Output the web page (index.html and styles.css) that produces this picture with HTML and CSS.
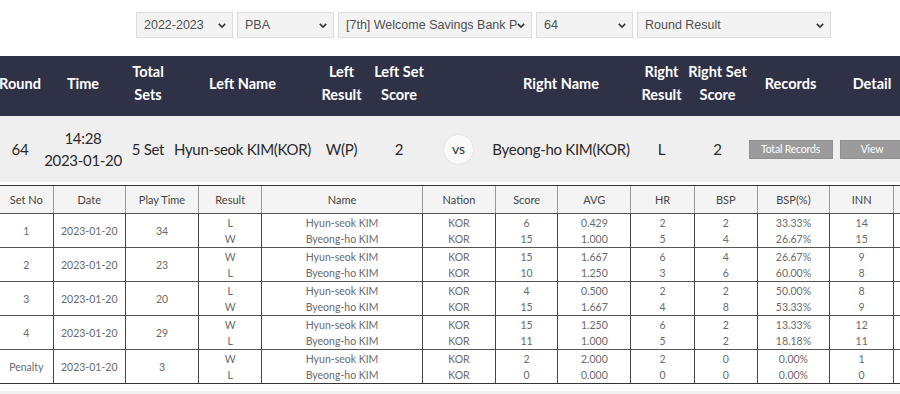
FILE: index.html
```html
<!DOCTYPE html>
<html lang="en">
<head>
<meta charset="utf-8">
<title>Round Result</title>
<link rel="stylesheet" href="styles.css">
</head>
<body>
<div class="page">
  <div class="filters">
    <label class="sel w-s"><select><option>2022-2023</option></select><svg class="chev" viewBox="0 0 10 6"><path d="M1 1l4 4 4-4"/></svg></label>
    <label class="sel w-s"><select><option>PBA</option></select><svg class="chev" viewBox="0 0 10 6"><path d="M1 1l4 4 4-4"/></svg></label>
    <label class="sel w-l"><select class="tight"><option>[7th] Welcome Savings Bank PBA Championship</option></select><svg class="chev" viewBox="0 0 10 6"><path d="M1 1l4 4 4-4"/></svg></label>
    <label class="sel w-s"><select><option>64</option></select><svg class="chev" viewBox="0 0 10 6"><path d="M1 1l4 4 4-4"/></svg></label>
    <label class="sel w-l"><select><option>Round Result</option></select><svg class="chev" viewBox="0 0 10 6"><path d="M1 1l4 4 4-4"/></svg></label>
  </div>

  <div class="match">
    <div class="mgrid mhead">
      <div>Round</div>
      <div>Time</div>
      <div>Total<br>Sets</div>
      <div>Left Name</div>
      <div>Left<br>Result</div>
      <div>Left Set<br>Score</div>
      <div></div>
      <div>Right Name</div>
      <div>Right<br>Result</div>
      <div>Right Set<br>Score</div>
      <div>Records</div>
      <div>Detail</div>
    </div>
    <div class="mgrid mrow">
      <div>64</div>
      <div class="time">14:28<br>2023-01-20</div>
      <div>5 Set</div>
      <div>Hyun-seok KIM(KOR)</div>
      <div>W(P)</div>
      <div>2</div>
      <div><span class="vs">vs</span></div>
      <div>Byeong-ho KIM(KOR)</div>
      <div>L</div>
      <div>2</div>
      <div><button class="btn btn-rec">Total Records</button></div>
      <div><button class="btn btn-view">View</button></div>
    </div>
  </div>

  <table class="sets">
    <colgroup>
      <col class="c53"><col class="c72"><col class="c73"><col class="c63"><col class="c160"><col class="c73"><col class="c62"><col class="c73"><col class="c63"><col class="c63"><col class="c72"><col class="c64"><col class="c40">
    </colgroup>
    <thead>
      <tr><th>Set No</th><th>Date</th><th>Play Time</th><th>Result</th><th>Name</th><th>Nation</th><th>Score</th><th>AVG</th><th>HR</th><th>BSP</th><th>BSP(%)</th><th>INN</th><th></th></tr>
    </thead>
    <tbody>
      <tr class="top"><td rowspan="2">1</td><td rowspan="2">2023-01-20</td><td rowspan="2">34</td><td>L</td><td>Hyun-seok KIM</td><td>KOR</td><td>6</td><td>0.429</td><td>2</td><td>2</td><td>33.33%</td><td>14</td><td rowspan="2"></td></tr>
      <tr><td>W</td><td>Byeong-ho KIM</td><td>KOR</td><td>15</td><td>1.000</td><td>5</td><td>4</td><td>26.67%</td><td>15</td></tr>
      <tr class="top"><td rowspan="2">2</td><td rowspan="2">2023-01-20</td><td rowspan="2">23</td><td>W</td><td>Hyun-seok KIM</td><td>KOR</td><td>15</td><td>1.667</td><td>6</td><td>4</td><td>26.67%</td><td>9</td><td rowspan="2"></td></tr>
      <tr><td>L</td><td>Byeong-ho KIM</td><td>KOR</td><td>10</td><td>1.250</td><td>3</td><td>6</td><td>60.00%</td><td>8</td></tr>
      <tr class="top"><td rowspan="2">3</td><td rowspan="2">2023-01-20</td><td rowspan="2">20</td><td>L</td><td>Hyun-seok KIM</td><td>KOR</td><td>4</td><td>0.500</td><td>2</td><td>2</td><td>50.00%</td><td>8</td><td rowspan="2"></td></tr>
      <tr><td>W</td><td>Byeong-ho KIM</td><td>KOR</td><td>15</td><td>1.667</td><td>4</td><td>8</td><td>53.33%</td><td>9</td></tr>
      <tr class="top"><td rowspan="2">4</td><td rowspan="2">2023-01-20</td><td rowspan="2">29</td><td>W</td><td>Hyun-seok KIM</td><td>KOR</td><td>15</td><td>1.250</td><td>6</td><td>2</td><td>13.33%</td><td>12</td><td rowspan="2"></td></tr>
      <tr><td>L</td><td>Byeong-ho KIM</td><td>KOR</td><td>11</td><td>1.000</td><td>5</td><td>2</td><td>18.18%</td><td>11</td></tr>
      <tr class="top"><td rowspan="2">Penalty</td><td rowspan="2">2023-01-20</td><td rowspan="2">3</td><td>W</td><td>Hyun-seok KIM</td><td>KOR</td><td>2</td><td>2.000</td><td>2</td><td>0</td><td>0.00%</td><td>1</td><td rowspan="2"></td></tr>
      <tr><td>L</td><td>Byeong-ho KIM</td><td>KOR</td><td>0</td><td>0.000</td><td>0</td><td>0</td><td>0.00%</td><td>0</td></tr>
    </tbody>
  </table>
  <div class="band"></div>
</div>
</body>
</html>
```

FILE: styles.css
```css
html, body {
  margin: 0;
  padding: 0;
  background: #fff;
}
.page {
  width: 900px;
  height: 394px;
  overflow: hidden;
  font-family: Lato, "Liberation Sans", sans-serif;
}

/* filters */
.filters {
  display: flex;
  gap: 4px;
  padding: 12px 0 0 136px;
  height: 26px;
}
.sel {
  position: relative;
  display: block;
  height: 26px;
}
.w-s { width: 97px; }
.w-l { width: 194px; }
.sel select {
  appearance: none;
  -webkit-appearance: none;
  width: 100%;
  height: 26px;
  margin: 0;
  border: 1px solid #dcdcdc;
  border-radius: 0;
  background: #f3f3f3;
  color: #505050;
  font-family: "Liberation Sans", Arial, sans-serif;
  font-size: 12.5px;
  padding: 0 22px 0 7px;
  outline: none;
}
.sel select.tight {
  padding-right: 13px;
}
.chev {
  position: absolute;
  right: 7px;
  top: 11px;
  width: 8px;
  height: 5px;
  fill: none;
  stroke: #333;
  stroke-width: 2;
  pointer-events: none;
}

/* match summary */
.match {
  margin-top: 18px;
}
.mgrid {
  display: grid;
  grid-template-columns: 44px 82px 48px 141px 57px 58px 61px 144px 57px 55px 91px 72px;
  margin-left: -2px;
  text-align: center;
  align-items: center;
}
.mgrid > div {
  display: flex;
  justify-content: center;
  align-items: center;
  white-space: nowrap;
}
.mhead {
  background: #2f3247;
  color: #fff;
  height: 60px;
  box-sizing: border-box;
  padding-bottom: 6px;
  font-weight: 700;
  font-size: 14.5px;
  line-height: 23px;
}
.mrow {
  background: #efefef;
  color: #2a2a2a;
  height: 66px;
  font-size: 15px;
  line-height: 22px;
  letter-spacing: -0.3px;
}
.mrow .time {
  display: block;
}
.vs {
  display: inline-flex;
  justify-content: center;
  align-items: center;
  width: 31px;
  height: 31px;
  border-radius: 50%;
  background: #fafafa;
  border: 1px solid #e6e6e6;
  font-size: 14px;
  letter-spacing: 0;
  color: #333;
  line-height: 1;
  padding-bottom: 1px;
  box-sizing: border-box;
}
.btn {
  height: 19px;
  border: 1px solid #8f8f8f;
  background: #9b9b9b;
  color: #fff;
  font-family: Lato, sans-serif;
  font-size: 10.5px;
  letter-spacing: -0.2px;
  padding: 0;
  margin: 0;
  border-radius: 0;
}
.btn-rec { width: 84px; }
.btn-view { width: 64px; }

/* sets table */
.sets {
  margin-top: 3px;
  border-collapse: collapse;
  table-layout: fixed;
  width: 934px;
  font-size: 10.5px;
  color: #6a6a6a;
  text-align: center;
}
.c53 { width: 53px; }
.c72 { width: 72px; }
.c73 { width: 73px; }
.c63 { width: 63px; }
.c160 { width: 160px; }
.c62 { width: 62px; }
.c64 { width: 64px; }
.c40 { width: 40px; }
.sets th {
  height: 27px;
  padding: 0;
  background: #f4f4f4;
  font-weight: 400;
  color: #444;
  font-size: 11px;
  border-top: 1px solid #333;
  border-bottom: 1px solid #555;
  border-left: 1px solid #999;
}
.sets td {
  padding: 0;
  height: 16px;
  line-height: 16px;
  border-left: 1px solid #444;
}
.sets th:first-child,
.sets tr.top td:first-child {
  border-left: none;
}
.sets tr.top td {
  border-top: 1px solid #555;
  padding-top: 1px;
}
.sets tbody tr:first-child td {
  border-top: none;
}
.sets tbody tr:last-child td {
  border-bottom: 1px solid #333;
}
.sets tbody tr:nth-last-child(2) td[rowspan] {
  border-bottom: 1px solid #333;
}
.band {
  margin-top: 7px;
  height: 20px;
  background: #f0f0f0;
}
```
